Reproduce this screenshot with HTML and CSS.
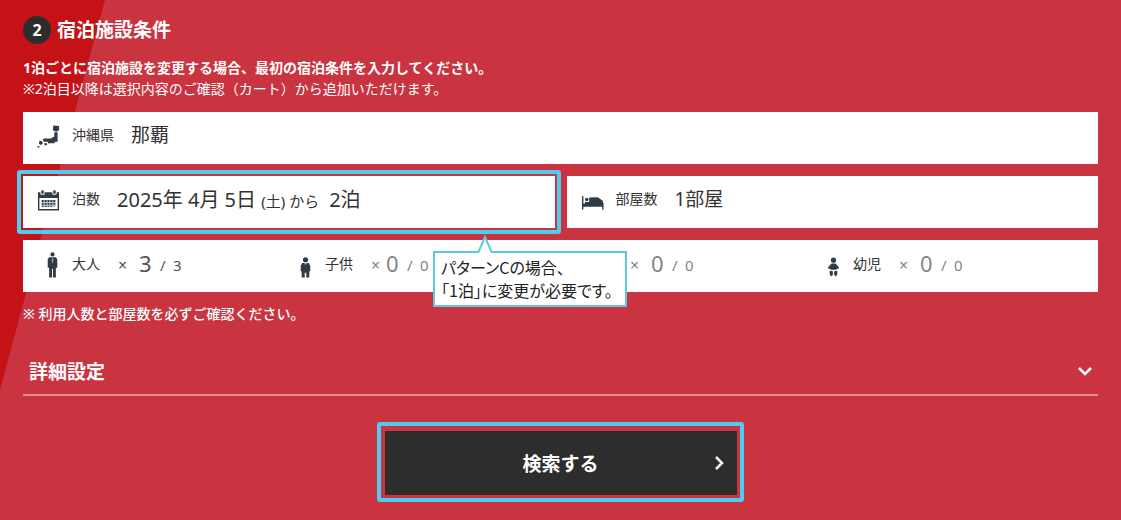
FILE: index.html
```html
<!DOCTYPE html>
<html lang="ja">
<head>
<meta charset="utf-8">
<meta name="viewport" content="width=device-width, initial-scale=1">
<title>宿泊施設条件</title>
<link rel="stylesheet" href="styles.css">
</head>
<body>
<svg class="backdrop" viewBox="0 0 105 390" aria-hidden="true"><path d="M0 0H105L0 390Z" fill="#c51217"/></svg>
<main class="panel">
  <h1 class="title"><span class="step">2</span>宿泊施設条件</h1>
  <p class="lead"><strong>1泊ごとに宿泊施設を変更する場合、最初の宿泊条件を入力してください。</strong><br>※2泊目以降は選択内容のご確認（カート）から追加いただけます。</p>

  <div class="fields">
    <button type="button" class="field field-wide">
      <svg class="icon" viewBox="0 0 24 24" aria-hidden="true"><path d="M17 1l6 .5V6l-3 1.500L16.500 6zM18 8h3.500v10H19l-1 1.500h-5l-1 .5-1-2H7l-1-2.500 2-1h7l1.500-1.500H18zM2.500 17l3 .5L6 20l-2 1.500L2 20zM7.500 19.500h3v2l-2.500.5zM.5 22.500h2V24h-2z"/></svg>
      <span class="label">沖縄県</span>
      <span class="value">那覇</span>
    </button>

    <div class="highlight">
      <button type="button" class="field">
        <svg class="icon" viewBox="0 0 24 24" aria-hidden="true"><path fill-rule="evenodd" d="M1 4h22v19H1zM2.500 10v11.500h19V10z"/><path d="M4 1.500h3.500V6H4zM16.500 1.500H20V6h-3.500z" stroke="#fff"/><path d="M4.500 12h15v7.500h-15z" fill="#c3c8cd"/><path d="M5 12h2v2H5zM8 12h2v2H8zM11 12h2v2h-2zM14 12h2v2h-2zM17 12h2v2h-2zM5 15h2v2H5zM8 15h2v2H8zM11 15h2v2h-2zM14 15h2v2h-2zM17 15h2v2h-2zM5 18h2v1H5zM8 18h2v1H8zM11 18h2v1h-2zM14 18h2v1h-2z"/></svg>
        <span class="label">泊数</span>
        <span class="value date"><span>2025年 4月 5日 <small>(土) から</small></span><span>2泊</span></span>
      </button>
      <div class="tip" role="note">
        <svg class="tip-arrow" viewBox="0 0 16 18" aria-hidden="true"><path d="M1 18L8 2l7 16" fill="#fff" stroke="#5cc8e4" stroke-width="2"/></svg>
        パターンCの場合、<br>「1泊」に変更が必要です。
      </div>
    </div>

    <button type="button" class="field">
      <svg class="icon" viewBox="0 0 24 24" aria-hidden="true"><path d="M1 8h1.500v8H22v-1h1.500v7H22v-3H2.500v3H1z"/><circle cx="6" cy="11.500" r="1.800"/><path d="M4 14h19v2.500H4zM8.500 9.500l9-.5 5.500 4v2H8.500z"/></svg>
      <span class="label">部屋数</span>
      <span class="value">1部屋</span>
    </button>

    <button type="button" class="field field-wide people">
      <span class="person">
        <svg class="icon" viewBox="0 0 24 28" aria-hidden="true"><circle cx="12" cy="3" r="2.200"/><path d="M8.500 6h7l1.500 2v9h-1.500v10H12.500V18h-1v9H8.500V17H7V8z"/><path d="M12 6l1 3-1 4-1-4z" fill="#8d969f"/></svg>
        <span class="label">大人</span><span class="times">×</span><span class="count">3</span><span class="total">/&ensp;3</span>
      </span>
      <span class="person empty near">
        <svg class="icon" viewBox="0 0 24 28" aria-hidden="true"><circle cx="12" cy="8.500" r="2.700"/><path d="M8.500 12h7l1.500 3v5.500h-1V27h-3.200v-5h-1.600v5H8v-6.500H7V15z"/><path d="M10.500 12h3L12 14z" fill="#aeb5bd"/></svg>
        <span class="label">子供</span><span class="times">×</span><span class="count">0</span><span class="total">/&ensp;0</span>
      </span>
      <span class="person empty bare">
        <span class="times">×</span><span class="count">0</span><span class="total">/&ensp;0</span>
      </span>
      <span class="person empty">
        <svg class="icon" viewBox="0 0 24 28" aria-hidden="true"><circle cx="12" cy="9" r="2.700"/><path d="M10 12.500h4l3.500 3.500v2h-2L15 19H9l-.5-1h-2v-2zM8 20l3.300.5v4L9.500 26 8 23.500zM16 20l-3.300.5v4l1.800 1.500 1.500-2.500z"/></svg>
        <span class="label">幼児</span><span class="times">×</span><span class="count">0</span><span class="total">/&ensp;0</span>
      </span>
    </button>
  </div>

  <p class="note">※ 利用人数と部屋数を必ずご確認ください。</p>

  <button type="button" class="details">詳細設定
    <svg class="chevron" viewBox="0 0 16 16" aria-hidden="true"><path d="M2 5l6 6 6-6"/></svg>
  </button>

  <div class="submit-wrap highlight">
    <button type="submit" class="submit">検索する
      <svg class="chevron submit-chevron" viewBox="0 0 16 16" aria-hidden="true"><path d="M5 2l6 6-6 6"/></svg>
    </button>
  </div>
</main>
</body>
</html>
```

FILE: styles.css
```css
* { box-sizing: border-box; }

body {
  margin: 0;
  min-height: 100vh;
  background: #ca3440;
  color: #fff;
  font-family: "Noto Sans", "Noto Sans CJK JP", sans-serif;
  font-size: 14px;
}

button {
  border: 0;
  border-radius: 0;
  font-family: inherit;
  color: inherit;
  cursor: pointer;
}

.backdrop {
  position: absolute;
  top: 0;
  left: 0;
  width: 105px;
  height: 390px;
}

.panel {
  position: relative;
  padding: 16px 23px;
}

.title {
  display: flex;
  align-items: center;
  gap: 6px;
  margin: 0;
  font-size: 19px;
  line-height: 28px;
}

.step {
  width: 28px;
  height: 28px;
  border-radius: 50%;
  background: #2d2d2d;
  font-size: 16px;
  text-align: center;
}

.lead {
  margin: 13px 0;
  line-height: 21px;
}

.fields {
  display: grid;
  grid-template-columns: 1fr 1fr;
  gap: 12px;
}

.field {
  display: flex;
  align-items: center;
  width: 100%;
  height: 52px;
  padding: 0 14px 8px;
  background: #fff;
  color: #333;
  text-align: left;
}

.field-wide { grid-column: 1 / -1; }

.icon {
  flex: none;
  width: 23px;
  height: 24px;
  margin: 4px 12px 0 0;
  fill: #2f3c48;
}

.label {
  flex: none;
  margin-right: 17px;
  font-size: 14px;
}

.value { font-size: 19px; white-space: nowrap; }
.date { display: flex; gap: 10px; align-items: baseline; font-size: 20px; }
.value small { font-size: 15px; }

.highlight { position: relative; }

.highlight::after {
  content: "";
  position: absolute;
  inset: -6px;
  border: 4px solid #4fcdf0;
  border-radius: 3px;
  pointer-events: none;
}

.tip {
  position: absolute;
  z-index: 1;
  top: 75px;
  left: 410px;
  padding: 3px 12px 3px 6px;
  border: 2px solid #5cc8e4;
  background: #fff;
  color: #222;
  font-family: "Noto Sans CJK JP", sans-serif;
  font-feature-settings: "palt";
  font-size: 16px;
  line-height: 23px;
  white-space: nowrap;
}

.tip-arrow {
  position: absolute;
  top: -18px;
  left: 42px;
  width: 16px;
  height: 18px;
}

.people {
  display: grid;
  grid-template-columns: 253fr 259fr 269fr 262fr;
  padding: 0 14px 6px 18px;
}

.person {
  display: flex;
  align-items: center;
  color: #555;
}

.people .icon { height: 28px; margin: 4px 8px 0 0; }
.people .label { margin-right: 18px; color: #333; }
.times { width: 21px; padding-top: 4px; font-size: 16px; }
.count { width: 21px; font-size: 22px; }
.total { padding-top: 4px; font-size: 15px; }
.empty .times, .empty .count, .empty .total { color: #858585; }
.near .times { width: 15px; }
.bare { padding-left: 77px; }

.note {
  margin: 11px 0 0;
  line-height: 21px;
  font-weight: 500;
}

.details {
  display: flex;
  align-items: center;
  justify-content: space-between;
  width: 100%;
  height: 48px;
  margin-top: 24px;
  padding: 0 5px 0 6px;
  border-bottom: 2px solid #e58d93;
  background: transparent;
  font-size: 19px;
  font-weight: 700;
}

.chevron {
  width: 16px;
  height: 16px;
  fill: none;
  stroke: #fff;
  stroke-width: 2.500;
}

.submit-wrap {
  width: 352px;
  max-width: 100%;
  margin: 35px auto 0;
}

.submit-wrap::after { inset: -9px -7px -7px -8px; }

.submit {
  display: grid;
  grid-template-columns: 1fr auto 1fr;
  align-items: center;
  width: 100%;
  height: 64px;
  padding: 0 10px;
  background: #2d2d2d;
  font-size: 19px;
  font-weight: 700;
}

.submit::before { content: ""; }
.submit-chevron { justify-self: end; }
```
